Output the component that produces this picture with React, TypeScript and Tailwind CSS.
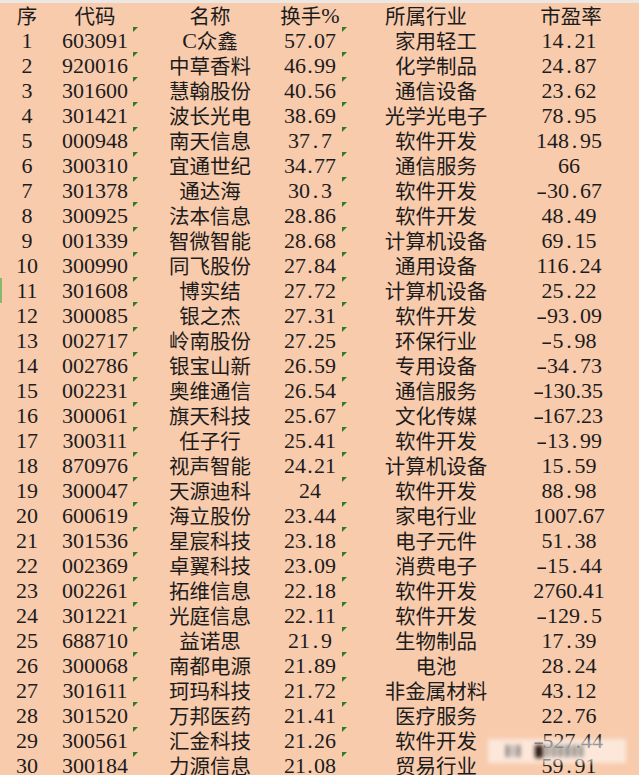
import React from "react";

const rows: [string, string, string, string, string, string][] = [
  ["1", "603091", "C众鑫", "57.07", "家用轻工", "14.21"],
  ["2", "920016", "中草香料", "46.99", "化学制品", "24.87"],
  ["3", "301600", "慧翰股份", "40.56", "通信设备", "23.62"],
  ["4", "301421", "波长光电", "38.69", "光学光电子", "78.95"],
  ["5", "000948", "南天信息", "37.7", "软件开发", "148.95"],
  ["6", "300310", "宜通世纪", "34.77", "通信服务", "66"],
  ["7", "301378", "通达海", "30.3", "软件开发", "-30.67"],
  ["8", "300925", "法本信息", "28.86", "软件开发", "48.49"],
  ["9", "001339", "智微智能", "28.68", "计算机设备", "69.15"],
  ["10", "300990", "同飞股份", "27.84", "通用设备", "116.24"],
  ["11", "301608", "博实结", "27.72", "计算机设备", "25.22"],
  ["12", "300085", "银之杰", "27.31", "软件开发", "-93.09"],
  ["13", "002717", "岭南股份", "27.25", "环保行业", "-5.98"],
  ["14", "002786", "银宝山新", "26.59", "专用设备", "-34.73"],
  ["15", "002231", "奥维通信", "26.54", "通信服务", "-130.35"],
  ["16", "300061", "旗天科技", "25.67", "文化传媒", "-167.23"],
  ["17", "300311", "任子行", "25.41", "软件开发", "-13.99"],
  ["18", "870976", "视声智能", "24.21", "计算机设备", "15.59"],
  ["19", "300047", "天源迪科", "24", "软件开发", "88.98"],
  ["20", "600619", "海立股份", "23.44", "家电行业", "1007.67"],
  ["21", "301536", "星宸科技", "23.18", "电子元件", "51.38"],
  ["22", "002369", "卓翼科技", "23.09", "消费电子", "-15.44"],
  ["23", "002261", "拓维信息", "22.18", "软件开发", "2760.41"],
  ["24", "301221", "光庭信息", "22.11", "软件开发", "-129.5"],
  ["25", "688710", "益诺思", "21.9", "生物制品", "17.39"],
  ["26", "300068", "南都电源", "21.89", "电池", "28.24"],
  ["27", "301611", "珂玛科技", "21.72", "非金属材料", "43.12"],
  ["28", "301520", "万邦医药", "21.41", "医疗服务", "22.76"],
  ["29", "300561", "汇金科技", "21.26", "软件开发", "-527.44"],
  ["30", "300184", "力源信息", "21.08", "贸易行业", "59.91"],
];

function Num({ v }: { v: string }) {
  return (
    <>
      {v.split("").map((ch, i) =>
        ch === "." || ch === "-" ? (
          <span key={i} className="inline-block w-[0.5em] text-center">
            {ch === "-" ? <span className="inline-block scale-x-150">-</span> : ch}
          </span>
        ) : (
          <React.Fragment key={i}>{ch}</React.Fragment>
        )
      )}
    </>
  );
}

function Tri({ left }: { left: string }) {
  return (
    <span
      className={`absolute top-[-1px] ${left} w-0 h-0 border-t-[5px] border-t-[#2f7a25] border-r-[5px] border-r-transparent`}
    />
  );
}

const cell = "flex items-center justify-center whitespace-nowrap h-full";
const cjk = "[font-family:'Noto_Sans_CJK_SC',sans-serif] text-[20.5px]";
const num = "[font-family:'Liberation_Serif','Noto_Sans_CJK_SC',serif] text-[22px]";

export default function App() {
  return (
    <div className="relative w-[639px] h-[775px] overflow-hidden bg-[#f8cbad] border-t-[3px] border-t-[#ebe7e3] text-[#1c1c1c]">
      <div className="flex h-[25px]">
        <div className={`${cell} ${cjk} w-[54px]`}>序</div>
        <div className={`${cell} ${cjk} w-[82px]`}>代码</div>
        <div className={`${cell} ${cjk} w-[148px]`}>名称</div>
        <div className={`${cell} w-[52px]`}>
          <span className={cjk}>换手</span>
          <span className={num}>%</span>
        </div>
        <div className={`${cell} ${cjk} w-[200px] pr-[20px]`}>所属行业</div>
        <div className={`${cell} ${cjk} w-[66px] pl-[4px]`}>市盈率</div>
      </div>
      {rows.map((r, idx) => (
        <div
          key={r[0]}
          className={`relative flex h-[25px] ${idx === 10 ? "shadow-[inset_2px_0_0_#86b96a]" : ""}`}
        >
          <div className={`${cell} ${num} w-[54px]`}>{r[0]}</div>
          <div className={`${cell} ${num} w-[82px]`}>{r[1]}</div>
          <div className={`${cell} w-[148px]`}>
            {/^[A-Z]/.test(r[2]) ? (
              <>
                <span className={num}>{r[2][0]}</span>
                <span className={cjk}>{r[2].slice(1)}</span>
              </>
            ) : (
              <span className={cjk}>{r[2]}</span>
            )}
          </div>
          <div className={`${cell} ${num} w-[52px]`}>
            <Num v={r[3]} />
          </div>
          <div className={`${cell} ${cjk} w-[200px]`}>{r[4]}</div>
          <div className={`${cell} ${num} w-[66px]`}>
            <Num v={r[5]} />
          </div>
          <Tri left="left-[133px]" />
          <Tri left="left-[342px]" />
        </div>
      ))}
      <div className="absolute left-[488px] top-[736px] w-[138px] h-[24px] bg-white/55 blur-[2px] flex items-center gap-[3px] px-[18px]">
        <span className="w-[3px] h-[12px] bg-[#6b6b6b]" />
        <span className="w-[2px] h-[12px] bg-[#8a8a8a]" />
        <span className="w-[3px] h-[12px] bg-[#6b6b6b]" />
        <span className="w-[8px] h-[13px] bg-[#2a1a14] ml-[12px]" />
        <span className="w-[3px] h-[12px] bg-[#7a7a7a]" />
        <span className="w-[4px] h-[12px] bg-[#8a8a8a]" />
        <span className="w-[3px] h-[12px] bg-[#6b6b6b]" />
        <span className="w-[5px] h-[12px] bg-[#8a8a8a]" />
        <span className="w-[3px] h-[12px] bg-[#6b6b6b]" />
        <span className="w-[4px] h-[12px] bg-[#8a8a8a]" />
      </div>
    </div>
  );
}
